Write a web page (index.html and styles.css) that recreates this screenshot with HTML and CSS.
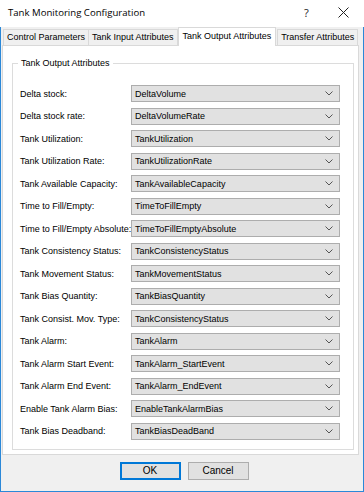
FILE: index.html
```html
<!DOCTYPE html>
<html>
<head>
<meta charset="utf-8">
<link rel="stylesheet" href="styles.css">
</head>
<body>
<div class="window">
  <div class="titlebar">
    <span class="title">Tank Monitoring Configuration</span>
    <span class="tb-help">?</span>
    <span class="tb-close"><svg width="11" height="11" viewBox="0 0 11 11"><path d="M0.5 0.5L10.5 10.5M10.5 0.5L0.5 10.5" stroke="#222" stroke-width="1"/></svg></span>
  </div>
  <div class="tabs">
    <div class="tab">Control Parameters</div>
    <div class="tab">Tank Input Attributes</div>
    <div class="tab active">Tank Output Attributes</div>
    <div class="tab">Transfer Attributes</div>
  </div>
  <div class="panel">
    <div class="group">
      <div class="legend">Tank Output Attributes</div>
      <div class="rows">
        <div class="row"><span class="lbl">Delta stock:</span><div class="combo"><span>DeltaVolume</span><svg class="chev" width="8" height="5" viewBox="0 0 8 5"><path d="M0.5 0.5L4 4L7.5 0.5" fill="none" stroke="#555" stroke-width="1"/></svg></div></div>
        <div class="row"><span class="lbl">Delta stock rate:</span><div class="combo"><span>DeltaVolumeRate</span><svg class="chev" width="8" height="5" viewBox="0 0 8 5"><path d="M0.5 0.5L4 4L7.5 0.5" fill="none" stroke="#555" stroke-width="1"/></svg></div></div>
        <div class="row"><span class="lbl">Tank Utilization:</span><div class="combo"><span>TankUtilization</span><svg class="chev" width="8" height="5" viewBox="0 0 8 5"><path d="M0.5 0.5L4 4L7.5 0.5" fill="none" stroke="#555" stroke-width="1"/></svg></div></div>
        <div class="row"><span class="lbl">Tank Utilization Rate:</span><div class="combo"><span>TankUtilizationRate</span><svg class="chev" width="8" height="5" viewBox="0 0 8 5"><path d="M0.5 0.5L4 4L7.5 0.5" fill="none" stroke="#555" stroke-width="1"/></svg></div></div>
        <div class="row"><span class="lbl">Tank Available Capacity:</span><div class="combo"><span>TankAvailableCapacity</span><svg class="chev" width="8" height="5" viewBox="0 0 8 5"><path d="M0.5 0.5L4 4L7.5 0.5" fill="none" stroke="#555" stroke-width="1"/></svg></div></div>
        <div class="row"><span class="lbl">Time to Fill/Empty:</span><div class="combo"><span>TimeToFillEmpty</span><svg class="chev" width="8" height="5" viewBox="0 0 8 5"><path d="M0.5 0.5L4 4L7.5 0.5" fill="none" stroke="#555" stroke-width="1"/></svg></div></div>
        <div class="row"><span class="lbl">Time to Fill/Empty Absolute:</span><div class="combo"><span>TimeToFillEmptyAbsolute</span><svg class="chev" width="8" height="5" viewBox="0 0 8 5"><path d="M0.5 0.5L4 4L7.5 0.5" fill="none" stroke="#555" stroke-width="1"/></svg></div></div>
        <div class="row"><span class="lbl">Tank Consistency Status:</span><div class="combo"><span>TankConsistencyStatus</span><svg class="chev" width="8" height="5" viewBox="0 0 8 5"><path d="M0.5 0.5L4 4L7.5 0.5" fill="none" stroke="#555" stroke-width="1"/></svg></div></div>
        <div class="row"><span class="lbl">Tank Movement Status:</span><div class="combo"><span>TankMovementStatus</span><svg class="chev" width="8" height="5" viewBox="0 0 8 5"><path d="M0.5 0.5L4 4L7.5 0.5" fill="none" stroke="#555" stroke-width="1"/></svg></div></div>
        <div class="row"><span class="lbl">Tank Bias Quantity:</span><div class="combo"><span>TankBiasQuantity</span><svg class="chev" width="8" height="5" viewBox="0 0 8 5"><path d="M0.5 0.5L4 4L7.5 0.5" fill="none" stroke="#555" stroke-width="1"/></svg></div></div>
        <div class="row"><span class="lbl">Tank Consist. Mov. Type:</span><div class="combo"><span>TankConsistencyStatus</span><svg class="chev" width="8" height="5" viewBox="0 0 8 5"><path d="M0.5 0.5L4 4L7.5 0.5" fill="none" stroke="#555" stroke-width="1"/></svg></div></div>
        <div class="row"><span class="lbl">Tank Alarm:</span><div class="combo"><span>TankAlarm</span><svg class="chev" width="8" height="5" viewBox="0 0 8 5"><path d="M0.5 0.5L4 4L7.5 0.5" fill="none" stroke="#555" stroke-width="1"/></svg></div></div>
        <div class="row"><span class="lbl">Tank Alarm Start Event:</span><div class="combo"><span>TankAlarm_StartEvent</span><svg class="chev" width="8" height="5" viewBox="0 0 8 5"><path d="M0.5 0.5L4 4L7.5 0.5" fill="none" stroke="#555" stroke-width="1"/></svg></div></div>
        <div class="row"><span class="lbl">Tank Alarm End Event:</span><div class="combo"><span>TankAlarm_EndEvent</span><svg class="chev" width="8" height="5" viewBox="0 0 8 5"><path d="M0.5 0.5L4 4L7.5 0.5" fill="none" stroke="#555" stroke-width="1"/></svg></div></div>
        <div class="row"><span class="lbl">Enable Tank Alarm Bias:</span><div class="combo"><span>EnableTankAlarmBias</span><svg class="chev" width="8" height="5" viewBox="0 0 8 5"><path d="M0.5 0.5L4 4L7.5 0.5" fill="none" stroke="#555" stroke-width="1"/></svg></div></div>
        <div class="row"><span class="lbl">Tank Bias Deadband:</span><div class="combo"><span>TankBiasDeadBand</span><svg class="chev" width="8" height="5" viewBox="0 0 8 5"><path d="M0.5 0.5L4 4L7.5 0.5" fill="none" stroke="#555" stroke-width="1"/></svg></div></div>
      </div>
    </div>
  </div>
  <div class="buttons">
    <div class="btn default">OK</div>
    <div class="btn">Cancel</div>
  </div>
</div>
</body>
</html>
```
FILE: styles.css
```css
html, body {
  margin: 0;
  padding: 0;
}
body {
  width: 364px;
  height: 492px;
  overflow: hidden;
  font-family: "Liberation Sans", Arial, sans-serif;
  font-size: 9px;
  color: #000;
}
.window {
  box-sizing: border-box;
  width: 364px;
  height: 492px;
  border: 1px solid #2b88d8;
  border-top: none;
  background: #f0f0f0;
  display: flex;
  flex-direction: column;
}
.titlebar {
  box-sizing: border-box;
  height: 27px;
  background: #fff;
  display: flex;
  align-items: center;
  font-family: "Open Sans", "Liberation Sans", sans-serif;
  font-size: 9.6px;
  color: #000;
  margin: 0 -1px;
  padding: 0 0 3px 8px;
  flex: none;
}
.title {
  flex: 1;
}
.tb-help {
  width: 12px;
  margin-right: 22px;
  font-size: 11px;
  color: #222;
}
.tb-close {
  width: 11px;
  height: 11px;
  margin-right: 15px;
  display: flex;
}
.tabs {
  display: flex;
  align-items: flex-end;
  height: 18px;
  padding-left: 2px;
  position: relative;
  z-index: 1;
  flex: none;
}
.tab {
  height: 16px;
  line-height: 15px;
  box-sizing: border-box;
  border: 1px solid #d9d9d9;
  border-bottom: none;
  background: #f0f0f0;
  padding: 0 3px;
  margin-right: -1px;
  white-space: nowrap;
}
.tab.active {
  height: 19px;
  line-height: 17px;
  background: #fff;
  border-color: #d9d9d9;
  margin: 0 1px 0 1px;
  padding: 0 4px;
  margin-bottom: -1px;
}
.panel {
  box-sizing: border-box;
  margin: 0 4px 0 1px;
  height: 410px;
  background: #fff;
  border: 1px solid #d9d9d9;
  padding: 17px 4px 0 9px;
  flex: none;
}
.group {
  box-sizing: border-box;
  height: 387px;
  border: 1px solid #dcdcdc;
  position: relative;
  padding: 21px 0 0 7px;
}
.legend {
  position: absolute;
  top: -7px;
  left: 5px;
  background: #fff;
  padding: 0 3px;
  line-height: 12px;
}
.rows {
  display: flex;
  flex-direction: column;
  gap: 5.5px;
}
.row {
  display: flex;
  align-items: center;
  height: 17px;
}
.lbl {
  width: 111px;
  white-space: nowrap;
}
.combo {
  box-sizing: border-box;
  width: 209px;
  height: 17px;
  background: #e1e1e1;
  border: 1px solid #adadad;
  display: flex;
  align-items: center;
  padding-left: 3px;
}
.combo span {
  flex: 1;
}
.chev {
  display: block;
  margin-right: 6px;
}
.buttons {
  display: flex;
  justify-content: center;
  gap: 7px;
  padding-top: 7px;
  padding-left: 4px;
}
.btn {
  box-sizing: border-box;
  width: 61px;
  height: 18px;
  background: #e1e1e1;
  border: 1px solid #adadad;
  text-align: center;
  line-height: 16px;
  font-size: 10px;
}
.btn.default {
  border: 1px solid #0078d7;
  box-shadow: inset 0 0 0 1px #0078d7;
}
```
